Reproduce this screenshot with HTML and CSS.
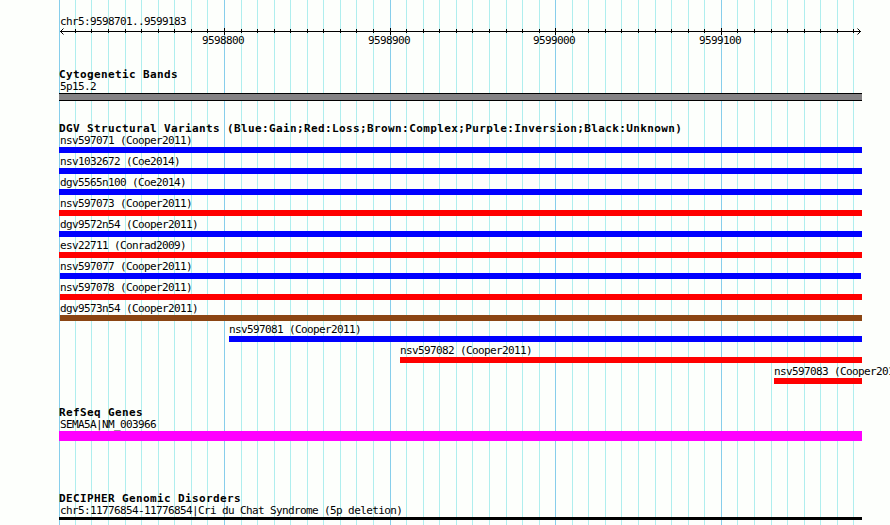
FILE: index.html
```html
<!DOCTYPE html>
<html lang="en">
<head>
  <meta charset="UTF-8">
  <title>chr5:9598701..9599183</title>
  <link rel="stylesheet" href="styles.css">
</head>
<body>

<div class="browser">
  <svg class="grid" id="grid" width="890" height="525"></svg>

  <div class="ruler">
    <div class="region">chr5:9598701..9599183</div>
    <svg class="scale" id="scale" width="803" height="8"></svg>
    <div class="positions">
      <span>9598800</span>
      <span>9598900</span>
      <span>9599000</span>
      <span>9599100</span>
    </div>
  </div>

  <div class="track cytobands">
    <h2>Cytogenetic Bands</h2>
    <div class="label">5p15.2</div>
    <div class="bar band"></div>
  </div>

  <div class="track variants">
    <h2>DGV Structural Variants (Blue:Gain;Red:Loss;Brown:Complex;Purple:Inversion;Black:Unknown)</h2>
    <div id="variants"></div>
  </div>

  <div class="track genes">
    <h2>RefSeq Genes</h2>
    <div class="label">SEMA5A|NM_003966</div>
    <div class="bar gene"></div>
  </div>

  <div class="track disorders">
    <h2>DECIPHER Genomic Disorders</h2>
    <div class="label">chr5:11776854-11776854|Cri du Chat Syndrome (5p deletion)</div>
    <div class="bar disorder"></div>
  </div>
</div>

<template id="variantTemplate">
  <div class="variant">
    <div class="label"></div>
    <div class="bar"></div>
  </div>
</template>

<script>
  const LEFT = 59;
  const ticks = [59, 75, 91, 108, 125, 141, 158, 174, 191, 207, 224, 241, 257,
    274, 290, 307, 323, 340, 356, 373, 390, 406, 423, 439, 456, 472, 489, 506,
    522, 539, 555, 572, 588, 605, 621, 638, 655, 671, 688, 704, 721, 737, 754,
    771, 787, 804, 820, 837, 853];

  // start and end are offsets from the left edge of the track
  const variants = [
    { name: 'nsv597071 (Cooper2011)', type: 'gain', start: 0, end: 803 },
    { name: 'nsv1032672 (Coe2014)', type: 'gain', start: 0, end: 803 },
    { name: 'dgv5565n100 (Coe2014)', type: 'gain', start: 0, end: 803 },
    { name: 'nsv597073 (Cooper2011)', type: 'loss', start: 0, end: 803 },
    { name: 'dgv9572n54 (Cooper2011)', type: 'gain', start: 0, end: 803 },
    { name: 'esv22711 (Conrad2009)', type: 'loss', start: 0, end: 803 },
    { name: 'nsv597077 (Cooper2011)', type: 'gain', start: 1, end: 802 },
    { name: 'nsv597078 (Cooper2011)', type: 'loss', start: 1, end: 803 },
    { name: 'dgv9573n54 (Cooper2011)', type: 'complex', start: 1, end: 803 },
    { name: 'nsv597081 (Cooper2011)', type: 'gain', start: 170, end: 803 },
    { name: 'nsv597082 (Cooper2011)', type: 'loss', start: 341, end: 803 },
    { name: 'nsv597083 (Cooper2011)', type: 'loss', start: 715, end: 803 }
  ];

  function addShape(svg, tag, attrs) {
    const el = document.createElementNS('http://www.w3.org/2000/svg', tag);
    for (const key in attrs) {
      el.setAttribute(key, attrs[key]);
    }
    svg.appendChild(el);
  }

  const grid = document.getElementById('grid');
  const scale = document.getElementById('scale');

  ticks.forEach(function (x, i) {
    const major = i % 10 === 0;
    addShape(grid, 'rect', { x: x, y: 0, width: 1, height: 525, class: major ? 'major' : 'minor' });
    if (i > 0) {
      addShape(scale, 'rect', { x: x - LEFT, y: major ? 0 : 1, width: 1, height: major ? 7 : 4 });
    }
  });
  addShape(scale, 'rect', { x: 1, y: 3, width: 801, height: 1 });
  addShape(scale, 'path', { d: 'M4.5 0.5L1.5 3.5L4.5 6.5M798.5 0.5L801.5 3.5L798.5 6.5', class: 'arrow' });

  const list = document.getElementById('variants');
  const template = document.getElementById('variantTemplate');

  variants.forEach(function (v) {
    const row = template.content.cloneNode(true);
    const label = row.querySelector('.label');
    const bar = row.querySelector('.bar');
    label.textContent = v.name;
    label.style.marginLeft = Math.max(v.start - 1, 0) + 'px';
    bar.classList.add(v.type);
    bar.style.marginLeft = v.start + 'px';
    bar.style.width = (v.end - v.start) + 'px';
    list.appendChild(row);
  });
</script>
</body>
</html>
```
FILE: styles.css
```css
body {
  margin: 0;
  background-color: #fdfffc;
  color: #000;
  font-family: "DejaVu Sans Mono", monospace;
  font-size: 11px;
  line-height: 13px;
  letter-spacing: -0.62px;
}

.browser {
  position: relative;
  width: 890px;
  height: 525px;
  overflow: hidden;
}

.grid {
  position: absolute;
  top: 0;
  left: 0;
}

.grid .minor {
  fill: #afeeee;
}

.grid .major {
  fill: #87ceeb;
}

.ruler,
.track {
  position: relative;
  margin-left: 59px;
  white-space: nowrap;
}

.ruler {
  height: 68px;
  padding-top: 15px;
  box-sizing: border-box;
}

.region {
  padding-left: 1px;
}

.scale {
  display: block;
}

.arrow {
  fill: none;
  stroke: #000;
}

.positions {
  display: grid;
  grid-template-columns: 166px 165px 166px 42px;
  margin-top: -2px;
  padding-left: 143px;
}

h2 {
  height: 10px;
  margin: 0;
  font-size: 11px;
  font-weight: bold;
  letter-spacing: 0.38px;
}

.label {
  padding: 2px 0 0 1px;
}

.bar {
  width: 803px;
  height: 6px;
}

.band {
  height: 8px;
  box-sizing: border-box;
  border: solid #000;
  border-width: 1px 0;
  background-color: #848284;
}

.gain {
  background-color: #0000ff;
}

.loss {
  background-color: #ff0000;
}

.complex {
  background-color: #8b4513;
}

.gene {
  height: 10px;
  background-color: #ff00ff;
}

.disorder {
  height: 3px;
  background-color: #000;
}

.variants {
  margin-top: 21px;
}

.genes {
  margin-top: 22px;
}

.disorders {
  margin-top: 51px;
}
```
